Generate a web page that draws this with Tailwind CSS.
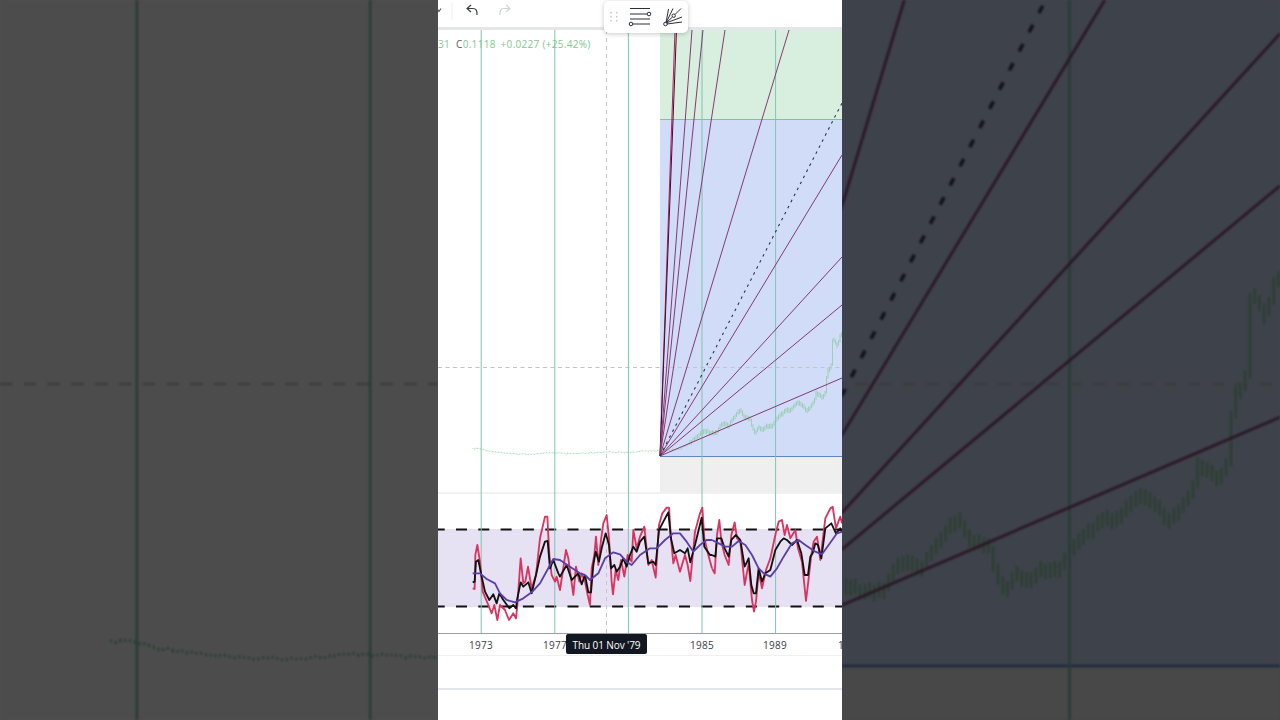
<!DOCTYPE html>
<html lang="en">
<head>
  <meta charset="UTF-8" />
  <meta name="viewport" content="width=device-width, initial-scale=1.0">
  <title>Chart</title>
  <script src="https://cdn.jsdelivr.net/npm/@tailwindcss/browser@4"></script>
</head>
<body class="h-screen w-screen overflow-hidden bg-white font-['Open_Sans',sans-serif]">
  <div class="flex h-[720px] w-[1280px]">

    <!-- blurred background of the video, left -->
    <div class="h-full w-[438px] overflow-hidden bg-[#4d4d4d]">
      <svg class="block h-full w-full brightness-30 blur-[1px]" viewBox="438 246.4 138.2 227.1" preserveAspectRatio="none">
        <use href="#chart" stroke-width=".8" />
      </svg>
    </div>

    <!-- phone view -->
    <div class="relative flex h-full w-[404px] flex-col overflow-hidden bg-white">
      <header class="h-[30px] shrink-0 border-b-[3px] border-[#e4e6e9]">
        <svg class="block" width="404" height="27" viewBox="438 0 404 27" fill="none">
          <path d="M437 8.5 L439 11.5 L441 8.5" stroke="#555" stroke-width="1.1" />
          <path d="M452 2V20" stroke="#f0f1f3" />
          <path d="M471 5 L467 8.5 L471 12 M467 8.5 H473 Q477.5 8.5 477 15" stroke="#3a3d45" stroke-width="1.2" />
          <path d="M506 5 L510 8.5 L506 12 M510 8.5 H504 Q499.5 8.5 500 15" stroke="#d0d3d9" stroke-width="1.2" />
        </svg>
      </header>

      <svg class="block shrink-0" width="404" height="603" viewBox="438 30 404 603" fill="none">
        <use href="#chart" stroke-width="1" />
        <!-- rsi pane -->
        <rect x="438" y="529" width="404" height="78" fill="#e6e1f3" />
        <path d="M433.7 529.5H842 M433.7 606.5H842" stroke="#111" stroke-width="2" stroke-dasharray="11 11.3" />
        <path d="M481.2 493V633 M554.8 493V633 M628.4 493V633 M702 493V633 M775.6 493V633" stroke="#7fc4b2" />
        <path d="M606.5 493V633" stroke="#c4c4c4" stroke-dasharray="4 4" />

        <g stroke-linejoin="round" transform="translate(460 505) scale(.3333)">
          <polyline stroke="#d9345f" stroke-width="5.5" points="38,250 44,252 46,150 52,120 60,170 68,260 85,300 95,325 103,300 112,345 120,300 135,315 147,345 160,325 168,340 172,300 182,160 190,235 196,230 204,185 215,250 228,210 240,100 255,35 262,35 268,150 275,210 285,230 290,215 300,255 318,135 325,160 340,270 348,185 358,230 365,205 375,230" />
          <polyline stroke="#111" stroke-width="5.5" points="38,232 44,230 48,170 55,165 65,215 75,260 88,285 100,268 110,295 118,265 130,285 148,310 160,300 168,310 172,280 182,232 190,245 205,232 215,265 228,210 240,155 255,110 263,108 270,190 280,165 295,205 300,215 320,180 335,225 345,215 355,205 365,238 375,210" />
        </g>
        <g stroke-linejoin="round" transform="translate(585 505) scale(.3333)">
          <polyline stroke="#d9345f" stroke-width="5.5" points="0,230 8,270 15,300 20,190 28,150 33,95 40,180 48,105 55,55 65,30 72,100 80,230 84,268 92,195 100,225 108,165 118,215 128,150 140,170 145,75 155,130 165,95 178,65 190,180 200,165 212,218 222,60 232,25 245,8 252,8 258,100 265,175 272,150 285,200 300,150 308,180 316,228 330,80 345,25 352,8 358,100 370,150 381,190" />
          <polyline stroke="#111" stroke-width="5.5" points="0,210 10,262 18,262 25,180 32,140 42,170 50,130 62,85 72,120 78,190 88,180 95,200 105,185 115,160 125,185 135,150 145,125 155,140 165,110 178,95 190,175 205,170 212,180 222,75 235,50 250,22 258,100 268,145 285,135 300,145 308,130 316,172 330,120 350,38 358,125 375,150 381,150" />
        </g>
        <g stroke-linejoin="round" transform="translate(712 505) scale(.3333)">
          <polyline stroke="#d9345f" stroke-width="5.5" points="0,190 8,205 15,90 22,45 28,110 38,150 50,180 58,90 68,52 75,100 85,110 98,240 110,175 120,285 126,320 132,290 140,200 150,250 162,195 175,160 190,90 200,50 210,45 218,90 225,60 235,100 250,75 258,130 270,170 282,288 290,220 298,150 305,110 315,95 325,165 340,40 355,10 362,5 372,70 385,35 390,55" />
          <polyline stroke="#111" stroke-width="5.5" points="0,150 10,155 15,100 28,100 38,130 50,155 58,105 72,90 85,105 98,185 110,160 118,240 125,265 132,265 140,190 150,230 160,205 175,195 190,135 205,110 215,100 225,105 240,120 255,105 268,145 278,210 288,210 295,155 302,145 310,115 318,120 328,160 340,70 358,55 372,85 385,70 390,80" />
        </g>
        <!-- rsi moving average -->
        <g stroke="#5b3fa6" stroke-width="5.5" stroke-linejoin="round">
          <polyline transform="translate(460 505) scale(.3333)" points="38,205 60,205 80,222 105,235 120,265 140,285 165,292 190,280 215,262 240,235 262,195 280,162 300,165 330,185 360,205 375,210" />
          <polyline transform="translate(585 505) scale(.3333)" points="0,210 15,225 40,205 60,160 85,142 105,148 125,170 140,180 165,150 195,130 215,130 240,105 265,85 285,85 305,110 325,140 345,120 365,105 381,105" />
          <polyline transform="translate(712 505) scale(.3333)" points="0,105 20,115 40,125 60,125 80,108 100,120 120,150 140,190 155,205 175,215 195,190 215,155 240,115 260,105 280,120 310,140 330,148 350,120 375,85 390,80" />
        </g>
      </svg>

      <!-- time axis -->
      <div class="relative h-[23px] shrink-0 border-t border-b border-t-[#9aa0a6] border-b-[#eef0f2] text-[10px] leading-[22px] tracking-[.3px] text-[#3a3d45]">
        <span class="absolute left-[43px] -translate-x-1/2">1973</span>
        <span class="absolute left-[117px] -translate-x-1/2">1977</span>
        <span class="absolute left-[264px] -translate-x-1/2">1985</span>
        <span class="absolute left-[337px] -translate-x-1/2">1989</span>
        <span class="absolute left-[400px]">1993</span>
        <span class="absolute left-[128px] top-0 h-[20px] w-[81px] rounded-[2px] bg-[#131722] text-center leading-[22px] tracking-[-.1px] text-white">Thu 01 Nov '79</span>
      </div>
      <div class="h-[34px] shrink-0 border-b-2 border-[#e4e7ea]"></div>
      <div class="flex-1"></div>

      <!-- ohlc legend -->
      <div class="absolute left-[-6px] top-[37px] flex w-[210px] gap-[6px] text-[10px] leading-[14px] tracking-[.3px] text-[#7fc88f]">
        <span>831</span>
        <span><span class="text-[#555a63]">C</span>0.1118 <span class="ml-[2px]">+0.0227 (+25.42%)</span></span>
      </div>

      <!-- floating drawing toolbar -->
      <div class="absolute left-[166px] top-[1px] flex h-[32px] w-[84px] items-center rounded-[5px] bg-white shadow-[0_1px_5px_rgba(0,0,0,.22)]">
        <svg class="block" width="84" height="32" viewBox="604 1 84 32" fill="none">
          <g fill="#c8ccd2">
            <circle cx="611" cy="12.7" r=".9" /><circle cx="616.7" cy="12.7" r=".9" />
            <circle cx="611" cy="16.7" r=".9" /><circle cx="616.7" cy="16.7" r=".9" />
            <circle cx="611" cy="20.7" r=".9" /><circle cx="616.7" cy="20.7" r=".9" />
          </g>
          <g stroke="#2a2e39">
            <path d="M630 8.5H650 M630 14H647 M630 19H650 M633 24H650" />
            <circle cx="649" cy="14" r="1.8" />
            <circle cx="631" cy="24" r="1.8" />
            <path d="M666 23 L668.5 9 M666 23 L673 8.5 M666 23 L672.5 17 M675 14.5 L681 8.5 M666 23 L682 17 M667 24 L682 22" />
            <circle cx="673.7" cy="15.7" r="1.7" />
            <circle cx="665.5" cy="24" r="1.8" />
          </g>
        </svg>
      </div>
    </div>

    <!-- blurred background of the video, right -->
    <div class="h-full w-[438px] overflow-hidden bg-[#41454d]">
      <svg class="block h-full w-full brightness-30 blur-[1px]" viewBox="703.8 246.4 138.2 227.1" preserveAspectRatio="none">
        <use href="#chart" stroke-width=".8" />
      </svg>
    </div>
  </div>

  <!-- price chart and gann fan, shared by the phone view and both backgrounds -->
  <svg class="absolute h-0 w-0" aria-hidden="true">
    <defs>
      <g id="chart" fill="none">
        <rect x="438" y="30" width="404" height="603" fill="#fff" />
        <rect x="660" y="30" width="182" height="90" fill="#d8efdf" />
        <rect x="660" y="120" width="182" height="336.5" fill="#d0dcf8" />
        <rect x="660" y="456.5" width="182" height="36" fill="#efefef" />
        <path d="M660 119.5H842" stroke="#7cc49c" />
        <path d="M660 456.5H842" stroke="#5f85c4" />
        <path d="M438 493H842" stroke="#eeeeee" stroke-width="1.5" />
        <path id="price" stroke="#7cc88c" stroke-width=".6" />
        <path d="M438 367.5H842" stroke="#c4c4c4" stroke-dasharray="4 3.5" />
        <path d="M606.5 30V493" stroke="#c4c4c4" stroke-dasharray="4 4" />
        <path d="M481.2 30V493 M554.8 30V493 M628.4 30V493 M702 30V493 M775.6 30V493" stroke="#7fc4b2" />
        <g stroke="#853a72">
          <path d="M660 456 L675 30" stroke="#c2185b" />
          <path d="M660 456 L676.5 30" stroke="#3a1030" />
          <path d="M660 456 L692 30 M660 456 L703 30 M660 456 L725 30 M660 456 L789 30 M660 456 L842 155 M660 456 L842 257 M660 456 L842 305 M660 456 L842 378" />
        </g>
        <path d="M660 456 L842 103" stroke="#2a3550" stroke-width="1.1" stroke-dasharray="2.6 4.2" />
      </g>
    </defs>
  </svg>

  <script>
    // price bars: [x, y] waypoints read off the chart, bars every 1.5px
    const quiet = [[473,449],[478,448.3],[487,450.7],[513,454],[533,454],[553,452.7],[570,454],[600,452.7],[607,451.7],[627,452.7],[643,451],[660,450.7],[680,449],[690,443]];
    const active = [[690,443],[704.8,430.5],[710,432.6],[717.4,432.6],[720.5,425.2],[723.7,423.6],[728.9,426.2],[731,423.1],[735.2,415.7],[737.9,412.6],[741,411],[744.7,416.8],[750,418.4],[752.6,427.3],[755.2,433.6],[758.4,427.3],[763.1,430.5],[766.8,426.2],[772,426.2],[776.3,420],[781.5,414.7],[786.8,410.5],[791,410.5],[794.1,406.3],[797.3,403.1],[802.5,405.2],[807.3,411.5],[811,406.3],[814.1,403.1],[815.7,393.7],[819.4,394.7],[822.5,397.9],[825.2,392.6],[826.2,381],[827.8,370.5],[830.9,368.4],[831.5,349.5],[832.5,341.1],[834.1,339],[837.3,347.4],[839.9,336.9],[842,333]];

    function noise(i) {
      const s = Math.sin(i * 12.9898) * 43758.5453;
      return s - Math.floor(s);
    }

    function bars(points, half, jitter) {
      let d = '';
      let i = 0;
      let prev = points[0][1];
      for (let x = points[0][0]; x <= points[points.length - 1][0]; x += 1.5, i++) {
        const k = points.findIndex((p) => p[0] >= x);
        const b = points[Math.max(k, 1)];
        const a = points[Math.max(k, 1) - 1];
        const y = a[1] + (b[1] - a[1]) * (x - a[0]) / (b[0] - a[0]);
        const mid = y + (noise(i) - 0.5) * jitter;
        // a bar is at least long enough to reach the previous one on a steep move
        const top = Math.min(mid - half, prev);
        const bottom = Math.max(mid + half, prev);
        d += `M${x.toFixed(1)} ${top.toFixed(1)}V${bottom.toFixed(1)}`;
        prev = mid;
      }
      return d;
    }

    document.getElementById('price').setAttribute('d', bars(quiet, 0.5, 1) + bars(active, 2.5, 1.6));
  </script>
</body>
</html>
